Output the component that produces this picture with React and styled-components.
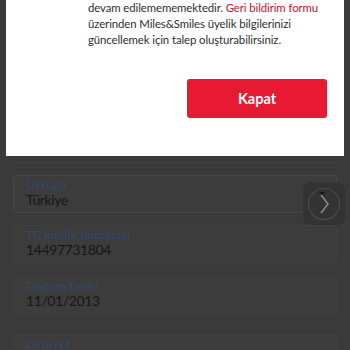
import React from "react";
import styled, { createGlobalStyle } from "styled-components";

const Global = createGlobalStyle`
  html, body { margin: 0; padding: 0; }
  body { font-family: Lato, "Open Sans", sans-serif; }
`;

const Screen = styled.div`
  position: relative;
  width: 350px;
  height: 350px;
  overflow: hidden;
  background: #3a3a3a;
`;

const Form = styled.div`
  display: flex;
  flex-direction: column;
  padding-top: 162px;
`;

const TopEdge = styled.div`
  height: 1px;
  margin: 0 13px;
  background: #414141;
`;

const Field = styled.div`
  margin: ${(p) => p.top}px 13px 0;
  height: 38px;
  box-sizing: border-box;
  padding: 2px 12px 0;
  background: #3c3c3c;
  border: 1px solid ${(p) => (p.strong ? "#464646" : "#404040")};
  border-radius: 2px;
  display: flex;
  flex-direction: column;
`;

const Label = styled.span`
  font-size: 12px;
  line-height: 13px;
  color: #34486e;
  letter-spacing: 0.3px;
`;

const Value = styled.span`
  font-size: 14px;
  line-height: 18px;
  letter-spacing: -0.4px;
  color: #171717;
`;

const Modal = styled.div`
  position: absolute;
  top: 0;
  left: 6px;
  width: 338px;
  height: 156px;
  background: #ffffff;
  box-sizing: border-box;
  padding: 0 17px 0 82px;
  display: flex;
  flex-direction: column;
`;

const Message = styled.p`
  margin: 0;
  font-size: 11.4px;
  letter-spacing: -0.1px;
  line-height: 16px;
  color: #2f2f2f;
  white-space: nowrap;
`;

const Link = styled.span`
  color: #c8102e;
`;

const Actions = styled.div`
  display: flex;
  justify-content: flex-end;
  margin-top: 31px;
`;

const Button = styled.button`
  width: 140px;
  height: 39px;
  border: none;
  border-radius: 3px;
  background: #e81932;
  color: #fff;
  font-family: Lato, sans-serif;
  font-weight: 700;
  font-size: 14.5px;
`;

const Floater = styled.div`
  position: absolute;
  top: 182px;
  left: 303px;
  width: 42px;
  height: 43px;
  border-radius: 8px;
  background: #333333;
  display: flex;
  align-items: center;
  justify-content: center;
`;

export default function App() {
  return (
    <Screen>
      <Global />
      <Form>
        <TopEdge />
        <Field top={12} strong>
          <Label>Uyruğu</Label>
          <Value>Türkiye</Value>
        </Field>
        <Field top={12}>
          <Label>TC kimlik numarası</Label>
          <Value>14497731804</Value>
        </Field>
        <Field top={13}>
          <Label>Doğum tarihi</Label>
          <Value>11/01/2013</Value>
        </Field>
        <Field top={21}>
          <Label>Cinsiyet</Label>
        </Field>
      </Form>
      <Floater>
        <svg width="36" height="36" viewBox="0 0 36 36">
          <circle cx="18" cy="18" r="15.5" fill="none" stroke="#4a4a4a" strokeWidth="1.2" />
          <path d="M15 9 L22 18 L15 27" fill="none" stroke="#8a8a8a" strokeWidth="1.5" />
          <path d="M13 6 L19 6 L16 9 Z" fill="#151515" />
        </svg>
      </Floater>
      <Modal>
        <Message>
          devam edilemememektedir. <Link>Geri bildirim formu</Link>
          <br />
          üzerinden Miles&amp;Smiles üyelik bilgilerinizi
          <br />
          güncellemek için talep oluşturabilirsiniz.
        </Message>
        <Actions>
          <Button>Kapat</Button>
        </Actions>
      </Modal>
    </Screen>
  );
}
